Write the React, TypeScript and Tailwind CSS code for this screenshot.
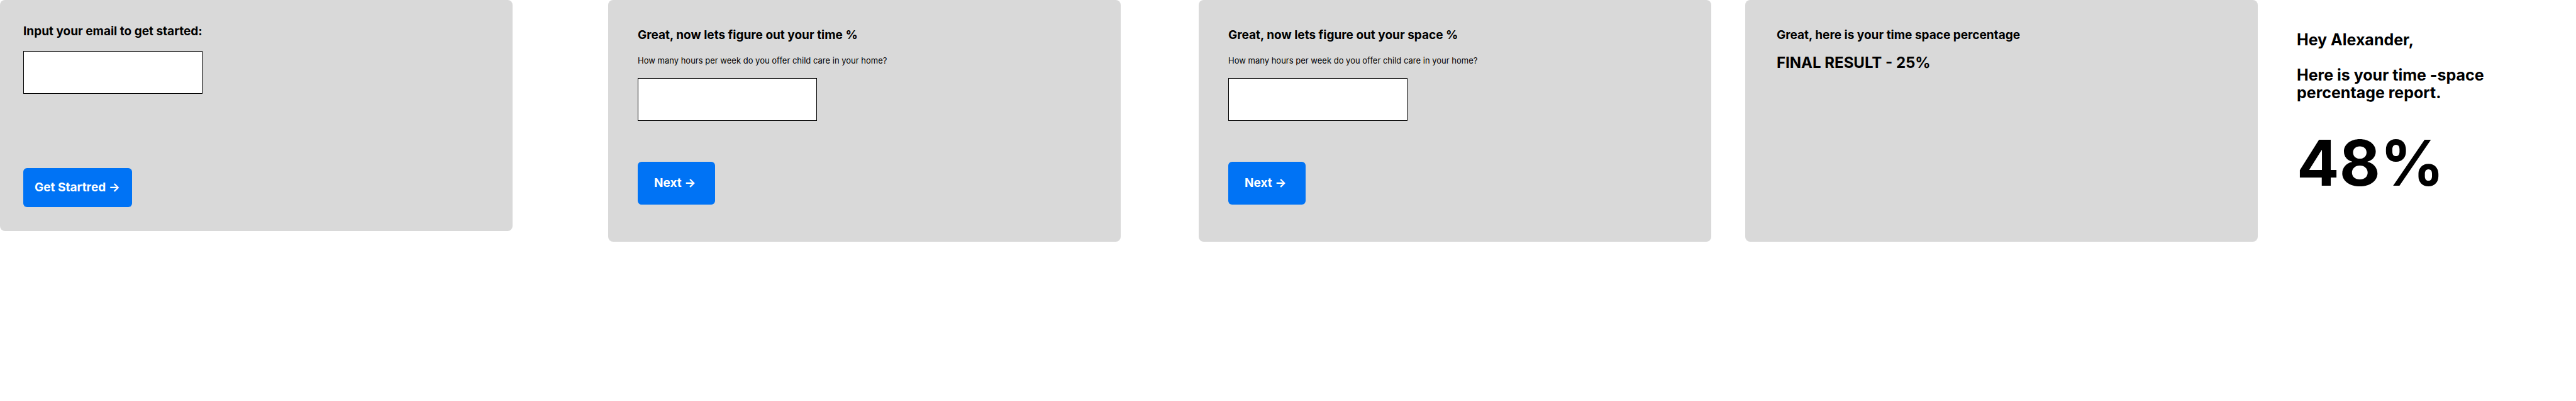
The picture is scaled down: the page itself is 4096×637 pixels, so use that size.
import type { ReactNode } from "react";

function ArrowLabel({ children }: { children: ReactNode }) {
  return <span className="whitespace-nowrap">{children} →</span>;
}

const button =
  "mt-auto rounded-md bg-[#0073f5] text-left text-[19px] leading-6 font-bold text-white";
const field = "h-[68px] w-[285px] border border-black bg-white px-4 text-[19px]";
const heading = "text-[19px] leading-6 font-bold";

type StepProps = { id: string; title: string; className: string };

function QuestionCard({ id, title, className }: StepProps) {
  return (
    <form
      className={`flex min-h-96 flex-col items-start rounded-lg bg-[#d9d9d9] px-[47px] pt-11 pb-[59px] ${className}`}
      onSubmit={(event) => event.preventDefault()}
    >
      <h2 className={heading}>{title}</h2>
      <label htmlFor={id} className="mt-[18px] text-[13px] leading-5">
        How many hours per week do you offer child care in your home?
      </label>
      <input id={id} type="text" className={`mt-[18px] ${field}`} />
      <button type="submit" className={`h-[68px] w-[123px] pl-[26px] ${button}`}>
        <ArrowLabel>Next</ArrowLabel>
      </button>
    </form>
  );
}

export default function App() {
  return (
    <main className="grid min-h-screen w-full grid-cols-[minmax(0,815fr)_minmax(0,967fr)_minmax(0,939fr)_minmax(0,869fr)_minmax(0,506fr)] items-start bg-white font-['Inter',sans-serif] text-black">
      <form
        className="flex min-h-[367px] flex-col items-start rounded-lg bg-[#d9d9d9] px-[37px] pt-[38px] pb-[38px]"
        onSubmit={(event) => event.preventDefault()}
      >
        <label htmlFor="email" className={heading}>
          Input your email to get started:
        </label>
        <input id="email" type="email" className={`mt-[19px] ${field}`} />
        <button type="submit" className={`h-[62px] w-[173px] pl-[18px] ${button}`}>
          <ArrowLabel>Get Startred</ArrowLabel>
        </button>
      </form>

      <QuestionCard id="time-hours" title="Great, now lets figure out your time %" className="ml-[152px]" />
      <QuestionCard id="space-hours" title="Great, now lets figure out your space %" className="ml-[124px]" />

      <section className="ml-[54px] min-h-96 rounded-lg bg-[#d9d9d9] px-[50px] pt-11">
        <h2 className={heading}>Great, here is your time space percentage</h2>
        <p className="mt-[18px] text-2xl leading-7 font-bold">FINAL RESULT - 25%</p>
      </section>

      <article className="ml-[62px] pt-[49px] font-bold">
        <p className="text-[25px] leading-7">Hey Alexander,</p>
        <p className="mt-7 text-[25px] leading-7">
          Here is your time -space
          <br />
          percentage report.
        </p>
        <p className="mt-9 text-[100px] leading-[124px]">48%</p>
      </article>
    </main>
  );
}
